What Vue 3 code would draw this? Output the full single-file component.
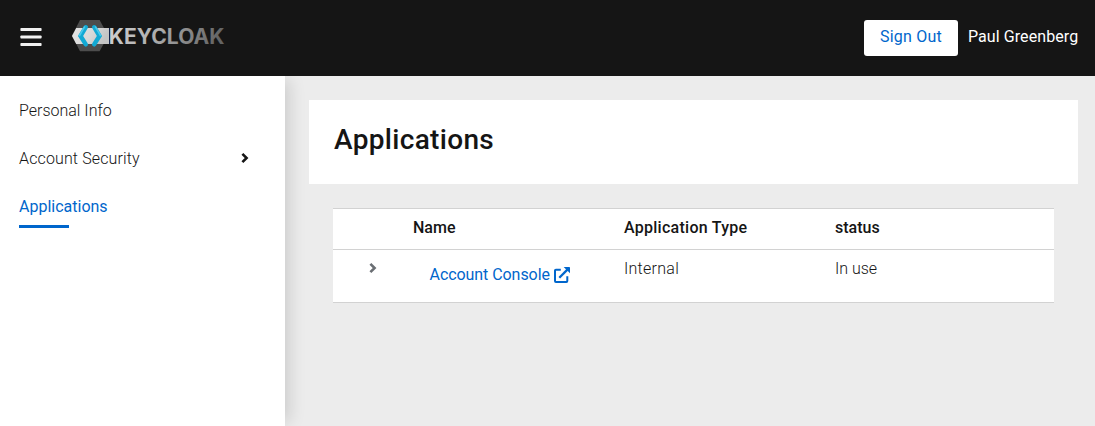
<script setup>
const rows = [{ name: 'Account Console', type: 'Internal', status: 'In use' }]
</script>

<template>
  <div class="page">
    <header class="header">
      <button class="burger" aria-label="Toggle navigation">
        <svg width="22" height="20" viewBox="0 0 22 20">
          <rect x="0.4" y="1" width="21.2" height="3" rx="0.8" />
          <rect x="0.4" y="8.5" width="21.2" height="3" rx="0.8" />
          <rect x="0.4" y="16" width="21.2" height="3" rx="0.8" />
        </svg>
      </button>
      <svg class="logo" width="154" height="34" viewBox="0 0 154 34">
        <defs>
          <linearGradient id="word" x1="0" x2="1" y1="0" y2="0.1">
            <stop offset="0" stop-color="#d2d2d2" />
            <stop offset="0.45" stop-color="#adadad" />
            <stop offset="1" stop-color="#646464" />
          </linearGradient>
          <linearGradient id="band" x1="0" x2="1" y1="0" y2="0.3">
            <stop offset="0" stop-color="#e6e6e6" />
            <stop offset="0.6" stop-color="#d8d8d8" />
            <stop offset="1" stop-color="#c4c4c4" />
          </linearGradient>
        </defs>
        <path d="M8 1h19.6l8.6 15.7-8.6 15.6H8L0 16.7z" fill="#4d4d4d" />
        <path d="M4.2 9h32.8v16H4.2L0 17z" fill="url(#band)" />
        <path d="M13.8 8.2 8.5 17l5.3 8.4" class="chev" />
        <path d="M22.2 8.2 27.5 17l-5.3 8.4" class="chev" />
        <path d="M12.8 7.4 7.2 17" class="chev-light" />
        <path d="M23.2 7.4 28.8 17" class="chev-light" />
        <text x="36.8" y="24.5" textLength="115.6" lengthAdjust="spacingAndGlyphs" fill="url(#word)">KEYCLOAK</text>
      </svg>
      <button class="signout">Sign Out</button>
      <span class="user">Paul Greenberg</span>
    </header>

    <div class="body">
      <nav class="sidebar">
        <a class="item">Personal Info</a>
        <a class="item security">
          <span>Account Security</span>
          <svg width="8" height="12" viewBox="0 0 8 12"><path d="m1.4 1.8 4.2 4.2-4.2 4.2" /></svg>
        </a>
        <a class="item current">Applications</a>
      </nav>

      <main class="main">
        <section class="title-card"><h1>Applications</h1></section>
        <div class="table">
          <div class="row head">
            <span></span>
            <span>Name</span>
            <span class="h-type">Application Type</span>
            <span>status</span>
          </div>
          <div v-for="r in rows" :key="r.name" class="row entry">
            <svg class="toggle" width="8" height="12" viewBox="0 0 8 12"><path d="m1.4 1.8 4.2 4.2-4.2 4.2" /></svg>
            <a class="link">
              <span>{{ r.name }}</span>
              <svg width="16" height="16" viewBox="0 0 16 16">
                <path d="M6.8 2.7H1.9a.9.9 0 0 0-.9.9v10.5c0 .5.4.9.9.9h10.5c.5 0 .9-.4.9-.9V9.3" class="box" />
                <path d="M5.3 10.7 13.4 2.6" class="arrow" />
                <path d="M9.7 0H15.3q.7 0 .7.7V6.3z" class="tip" />
              </svg>
            </a>
            <span class="type">{{ r.type }}</span>
            <span>{{ r.status }}</span>
          </div>
        </div>
      </main>
    </div>
  </div>
</template>

<style>
body { margin: 0; overflow: hidden; }
</style>

<style scoped>
.page {
  display: flex;
  flex-direction: column;
  height: 426px;
  background: #ececec;
  color: #151515;
  font: 300 16px/24px Roboto, sans-serif;
}
.header {
  display: flex;
  align-items: center;
  box-sizing: border-box;
  height: 76px;
  padding: 0 17px 0 20px;
  background: #151515;
}
button { border: 0; padding: 0; margin: 0; font: inherit; }
.burger { display: flex; width: 22px; height: 20px; margin-top: -2px; background: none; }
.burger rect { fill: #f0f0f0; }
.logo { margin: -4px 0 0 30px; }
.logo text { font: 700 21px Inter, sans-serif; }
.chev { fill: none; stroke: #12a9d4; stroke-width: 4.4; stroke-linecap: round; stroke-linejoin: miter; }
.chev-light { fill: none; stroke: #48c9ec; stroke-width: 1.6; }
.signout {
  width: 94px;
  height: 36px;
  margin-left: auto;
  border-radius: 3px;
  background: #fff;
  color: #06c;
  font-weight: 400;
  letter-spacing: 0.24px;
  line-height: 24px;
  padding-bottom: 3px;
}
.user { width: 110px; margin: -3px 0 0 10px; color: #fff; font-weight: 400; letter-spacing: 0.08px; white-space: nowrap; }
.body { display: flex; flex: 1; min-height: 0; }
.sidebar {
  box-sizing: border-box;
  width: 285px;
  padding: 11px 36px 0 19px;
  background: #fff;
  box-shadow: 8px 0 16px -4px rgba(3, 3, 3, 0.14);
  clip-path: inset(0 -24px 0 0);
}
.item { display: flex; align-items: center; justify-content: space-between; height: 48px; }
.security { letter-spacing: 0.13px; }
.item svg { margin-top: -2px; }
.item svg path, .toggle path { fill: none; stroke: #151515; stroke-width: 2.6; }
.current {
  position: relative;
  color: #06c;
  font-weight: 400;
}
.current::after {
  content: "";
  position: absolute;
  left: 0;
  bottom: 3px;
  width: 50px;
  height: 3px;
  background: #06c;
}
.main { flex: 1; padding: 24px 17px 0 24px; }
.title-card { box-sizing: border-box; height: 84px; padding: 22px 25px 0; background: #fff; }
h1 { margin: 0; font-size: 28px; font-weight: 500; line-height: 36px; letter-spacing: 0.33px; }
.table { margin: 24px 24px 0; border-top: 1px solid #d2d2d2; background: #fff; }
.row { display: grid; grid-template-columns: 80px 211px 211px 1fr; box-sizing: border-box; border-bottom: 1px solid #d2d2d2; white-space: nowrap; }
.head { height: 41px; padding-top: 7px; font-weight: 500; }
.h-type { letter-spacing: 0.27px; }
.entry { height: 53px; padding-top: 7px; align-items: start; }
.type { letter-spacing: 0.27px; }
.toggle { margin: 5px 0 0 36px; }
.toggle path { stroke: #6a6e73; }
.link { display: flex; align-items: center; margin: 6px 0 0 16.5px; color: #06c; font-weight: 400; letter-spacing: -0.06px; }
.link svg { margin: -1px 0 0 4px; }
.box { fill: none; stroke: #06c; stroke-width: 2; }
.arrow { fill: none; stroke: #06c; stroke-width: 2.3; }
.tip { fill: #06c; }
</style>
